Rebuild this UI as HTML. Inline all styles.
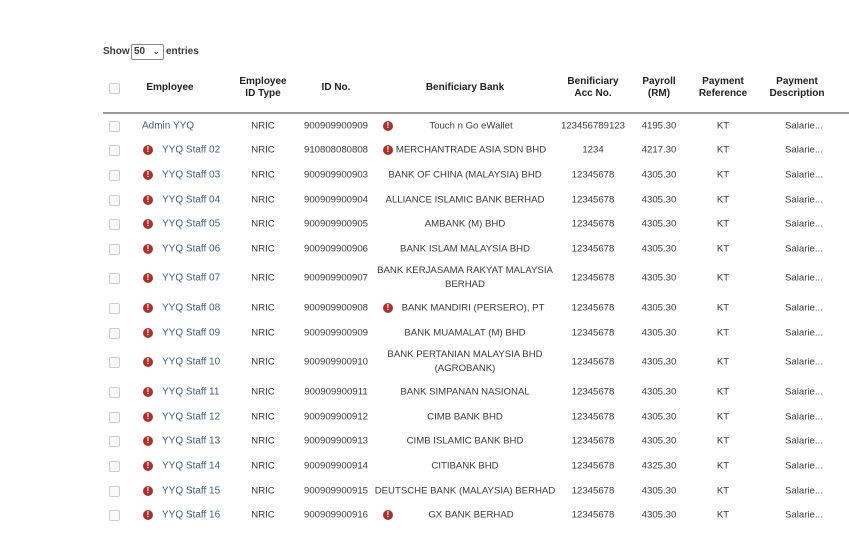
<!DOCTYPE html>
<html><head><style>
body{margin:0;width:849px;height:535px;background:#fff;font-family:"Liberation Sans",sans-serif;color:#3a3a3a;position:relative;overflow:hidden}
.a{position:absolute;font-size:9.6px;white-space:nowrap}
.l{transform:translateY(-50%)}
.c{transform:translate(-50%,-50%);text-align:center}
.h{font-weight:bold;font-size:10px;line-height:12px;color:#222}
.cb{position:absolute;width:9px;height:9px;border:1px solid #ccc;border-radius:2px;background:#fafafa;left:109px}
.i{position:absolute;width:10px;height:10px;border-radius:50%;background:#a8332c;color:#fff;font-size:8px;font-weight:bold;line-height:10px;text-align:center}
.emp{color:#4a5d70;font-size:10px}
.r{position:absolute;left:0;width:849px}
</style></head><body>
<div class="a" style="left:103px;top:46px;font-weight:bold;font-size:10px">Show</div>
<div style="position:absolute;left:131px;top:44px;width:29px;height:14px;border:1px solid #888;border-radius:2px;font-size:10px;font-weight:bold;line-height:14px;padding-left:2px">50 <span style="font-size:8px;margin-left:5px">&#8964;</span></div>
<div class="a" style="left:166px;top:46px;font-weight:bold;font-size:10px">entries</div>
<div class="cb" style="top:83px"></div>
<div class="a c h" style="left:170px;top:88px">Employee</div>
<div class="a c h" style="left:263px;top:88px">Employee<br>ID Type</div>
<div class="a c h" style="left:336px;top:88px">ID No.</div>
<div class="a c h" style="left:465px;top:88px">Benificiary Bank</div>
<div class="a c h" style="left:593px;top:88px">Benificiary<br>Acc No.</div>
<div class="a c h" style="left:659px;top:88px">Payroll<br>(RM)</div>
<div class="a c h" style="left:723px;top:88px">Payment<br>Reference</div>
<div class="a c h" style="left:797px;top:88px">Payment<br>Description</div>
<div style="position:absolute;left:103px;top:112px;width:746px;height:2px;background:#999"></div>

<div class="r" style="top:126px">
<div class="cb" style="top:-5px"></div><div class="a l emp" style="left:142px;top:0">Admin YYQ</div>
<div class="a c" style="left:263px;top:0">NRIC</div><div class="a c" style="left:336px;top:0">900909900909</div>
<div class="i" style="left:383px;top:-5px">!</div><div class="a c" style="left:471px;top:0">Touch n Go eWallet</div>
<div class="a c" style="left:593px;top:0">123456789123</div><div class="a c" style="left:659px;top:0">4195.30</div><div class="a c" style="left:723px;top:0">KT</div><div class="a l" style="left:785px;top:0">Salarie...</div></div>

<div class="r" style="top:150px">
<div class="cb" style="top:-5px"></div><div class="i" style="left:143px;top:-5px">!</div><div class="a l emp" style="left:162px;top:0">YYQ Staff 02</div>
<div class="a c" style="left:263px;top:0">NRIC</div><div class="a c" style="left:336px;top:0">910808080808</div>
<div class="i" style="left:383px;top:-5px">!</div><div class="a c" style="left:471px;top:0">MERCHANTRADE ASIA SDN BHD</div>
<div class="a c" style="left:593px;top:0">1234</div><div class="a c" style="left:659px;top:0">4217.30</div><div class="a c" style="left:723px;top:0">KT</div><div class="a l" style="left:785px;top:0">Salarie...</div></div>

<div class="r" style="top:175px">
<div class="cb" style="top:-5px"></div><div class="i" style="left:143px;top:-5px">!</div><div class="a l emp" style="left:162px;top:0">YYQ Staff 03</div>
<div class="a c" style="left:263px;top:0">NRIC</div><div class="a c" style="left:336px;top:0">900909900903</div>
<div class="a c" style="left:465px;top:0">BANK OF CHINA (MALAYSIA) BHD</div>
<div class="a c" style="left:593px;top:0">12345678</div><div class="a c" style="left:659px;top:0">4305.30</div><div class="a c" style="left:723px;top:0">KT</div><div class="a l" style="left:785px;top:0">Salarie...</div></div>

<div class="r" style="top:200px">
<div class="cb" style="top:-5px"></div><div class="i" style="left:143px;top:-5px">!</div><div class="a l emp" style="left:162px;top:0">YYQ Staff 04</div>
<div class="a c" style="left:263px;top:0">NRIC</div><div class="a c" style="left:336px;top:0">900909900904</div>
<div class="a c" style="left:465px;top:0">ALLIANCE ISLAMIC BANK BERHAD</div>
<div class="a c" style="left:593px;top:0">12345678</div><div class="a c" style="left:659px;top:0">4305.30</div><div class="a c" style="left:723px;top:0">KT</div><div class="a l" style="left:785px;top:0">Salarie...</div></div>

<div class="r" style="top:224px">
<div class="cb" style="top:-5px"></div><div class="i" style="left:143px;top:-5px">!</div><div class="a l emp" style="left:162px;top:0">YYQ Staff 05</div>
<div class="a c" style="left:263px;top:0">NRIC</div><div class="a c" style="left:336px;top:0">900909900905</div>
<div class="a c" style="left:465px;top:0">AMBANK (M) BHD</div>
<div class="a c" style="left:593px;top:0">12345678</div><div class="a c" style="left:659px;top:0">4305.30</div><div class="a c" style="left:723px;top:0">KT</div><div class="a l" style="left:785px;top:0">Salarie...</div></div>

<div class="r" style="top:249px">
<div class="cb" style="top:-5px"></div><div class="i" style="left:143px;top:-5px">!</div><div class="a l emp" style="left:162px;top:0">YYQ Staff 06</div>
<div class="a c" style="left:263px;top:0">NRIC</div><div class="a c" style="left:336px;top:0">900909900906</div>
<div class="a c" style="left:465px;top:0">BANK ISLAM MALAYSIA BHD</div>
<div class="a c" style="left:593px;top:0">12345678</div><div class="a c" style="left:659px;top:0">4305.30</div><div class="a c" style="left:723px;top:0">KT</div><div class="a l" style="left:785px;top:0">Salarie...</div></div>

<div class="r" style="top:278px">
<div class="cb" style="top:-5px"></div><div class="i" style="left:143px;top:-5px">!</div><div class="a l emp" style="left:162px;top:0">YYQ Staff 07</div>
<div class="a c" style="left:263px;top:0">NRIC</div><div class="a c" style="left:336px;top:0">900909900907</div>
<div class="a c" style="left:465px;top:0;line-height:14px">BANK KERJASAMA RAKYAT MALAYSIA<br>BERHAD</div>
<div class="a c" style="left:593px;top:0">12345678</div><div class="a c" style="left:659px;top:0">4305.30</div><div class="a c" style="left:723px;top:0">KT</div><div class="a l" style="left:785px;top:0">Salarie...</div></div>

<div class="r" style="top:308px">
<div class="cb" style="top:-5px"></div><div class="i" style="left:143px;top:-5px">!</div><div class="a l emp" style="left:162px;top:0">YYQ Staff 08</div>
<div class="a c" style="left:263px;top:0">NRIC</div><div class="a c" style="left:336px;top:0">900909900908</div>
<div class="i" style="left:383px;top:-5px">!</div><div class="a c" style="left:473px;top:0">BANK MANDIRI (PERSERO), PT</div>
<div class="a c" style="left:593px;top:0">12345678</div><div class="a c" style="left:659px;top:0">4305.30</div><div class="a c" style="left:723px;top:0">KT</div><div class="a l" style="left:785px;top:0">Salarie...</div></div>

<div class="r" style="top:333px">
<div class="cb" style="top:-5px"></div><div class="i" style="left:143px;top:-5px">!</div><div class="a l emp" style="left:162px;top:0">YYQ Staff 09</div>
<div class="a c" style="left:263px;top:0">NRIC</div><div class="a c" style="left:336px;top:0">900909900909</div>
<div class="a c" style="left:465px;top:0">BANK MUAMALAT (M) BHD</div>
<div class="a c" style="left:593px;top:0">12345678</div><div class="a c" style="left:659px;top:0">4305.30</div><div class="a c" style="left:723px;top:0">KT</div><div class="a l" style="left:785px;top:0">Salarie...</div></div>

<div class="r" style="top:362px">
<div class="cb" style="top:-5px"></div><div class="i" style="left:143px;top:-5px">!</div><div class="a l emp" style="left:162px;top:0">YYQ Staff 10</div>
<div class="a c" style="left:263px;top:0">NRIC</div><div class="a c" style="left:336px;top:0">900909900910</div>
<div class="a c" style="left:465px;top:0;line-height:14px">BANK PERTANIAN MALAYSIA BHD<br>(AGROBANK)</div>
<div class="a c" style="left:593px;top:0">12345678</div><div class="a c" style="left:659px;top:0">4305.30</div><div class="a c" style="left:723px;top:0">KT</div><div class="a l" style="left:785px;top:0">Salarie...</div></div>

<div class="r" style="top:392px">
<div class="cb" style="top:-5px"></div><div class="i" style="left:143px;top:-5px">!</div><div class="a l emp" style="left:162px;top:0">YYQ Staff 11</div>
<div class="a c" style="left:263px;top:0">NRIC</div><div class="a c" style="left:336px;top:0">900909900911</div>
<div class="a c" style="left:465px;top:0">BANK SIMPANAN NASIONAL</div>
<div class="a c" style="left:593px;top:0">12345678</div><div class="a c" style="left:659px;top:0">4305.30</div><div class="a c" style="left:723px;top:0">KT</div><div class="a l" style="left:785px;top:0">Salarie...</div></div>

<div class="r" style="top:417px">
<div class="cb" style="top:-5px"></div><div class="i" style="left:143px;top:-5px">!</div><div class="a l emp" style="left:162px;top:0">YYQ Staff 12</div>
<div class="a c" style="left:263px;top:0">NRIC</div><div class="a c" style="left:336px;top:0">900909900912</div>
<div class="a c" style="left:465px;top:0">CIMB BANK BHD</div>
<div class="a c" style="left:593px;top:0">12345678</div><div class="a c" style="left:659px;top:0">4305.30</div><div class="a c" style="left:723px;top:0">KT</div><div class="a l" style="left:785px;top:0">Salarie...</div></div>

<div class="r" style="top:441px">
<div class="cb" style="top:-5px"></div><div class="i" style="left:143px;top:-5px">!</div><div class="a l emp" style="left:162px;top:0">YYQ Staff 13</div>
<div class="a c" style="left:263px;top:0">NRIC</div><div class="a c" style="left:336px;top:0">900909900913</div>
<div class="a c" style="left:465px;top:0">CIMB ISLAMIC BANK BHD</div>
<div class="a c" style="left:593px;top:0">12345678</div><div class="a c" style="left:659px;top:0">4305.30</div><div class="a c" style="left:723px;top:0">KT</div><div class="a l" style="left:785px;top:0">Salarie...</div></div>

<div class="r" style="top:466px">
<div class="cb" style="top:-5px"></div><div class="i" style="left:143px;top:-5px">!</div><div class="a l emp" style="left:162px;top:0">YYQ Staff 14</div>
<div class="a c" style="left:263px;top:0">NRIC</div><div class="a c" style="left:336px;top:0">900909900914</div>
<div class="a c" style="left:465px;top:0">CITIBANK BHD</div>
<div class="a c" style="left:593px;top:0">12345678</div><div class="a c" style="left:659px;top:0">4325.30</div><div class="a c" style="left:723px;top:0">KT</div><div class="a l" style="left:785px;top:0">Salarie...</div></div>

<div class="r" style="top:491px">
<div class="cb" style="top:-5px"></div><div class="i" style="left:143px;top:-5px">!</div><div class="a l emp" style="left:162px;top:0">YYQ Staff 15</div>
<div class="a c" style="left:263px;top:0">NRIC</div><div class="a c" style="left:336px;top:0">900909900915</div>
<div class="a c" style="left:465px;top:0">DEUTSCHE BANK (MALAYSIA) BERHAD</div>
<div class="a c" style="left:593px;top:0">12345678</div><div class="a c" style="left:659px;top:0">4305.30</div><div class="a c" style="left:723px;top:0">KT</div><div class="a l" style="left:785px;top:0">Salarie...</div></div>

<div class="r" style="top:515px">
<div class="cb" style="top:-5px"></div><div class="i" style="left:143px;top:-5px">!</div><div class="a l emp" style="left:162px;top:0">YYQ Staff 16</div>
<div class="a c" style="left:263px;top:0">NRIC</div><div class="a c" style="left:336px;top:0">900909900916</div>
<div class="i" style="left:383px;top:-5px">!</div><div class="a c" style="left:471px;top:0">GX BANK BERHAD</div>
<div class="a c" style="left:593px;top:0">12345678</div><div class="a c" style="left:659px;top:0">4305.30</div><div class="a c" style="left:723px;top:0">KT</div><div class="a l" style="left:785px;top:0">Salarie...</div></div>
</body></html>
